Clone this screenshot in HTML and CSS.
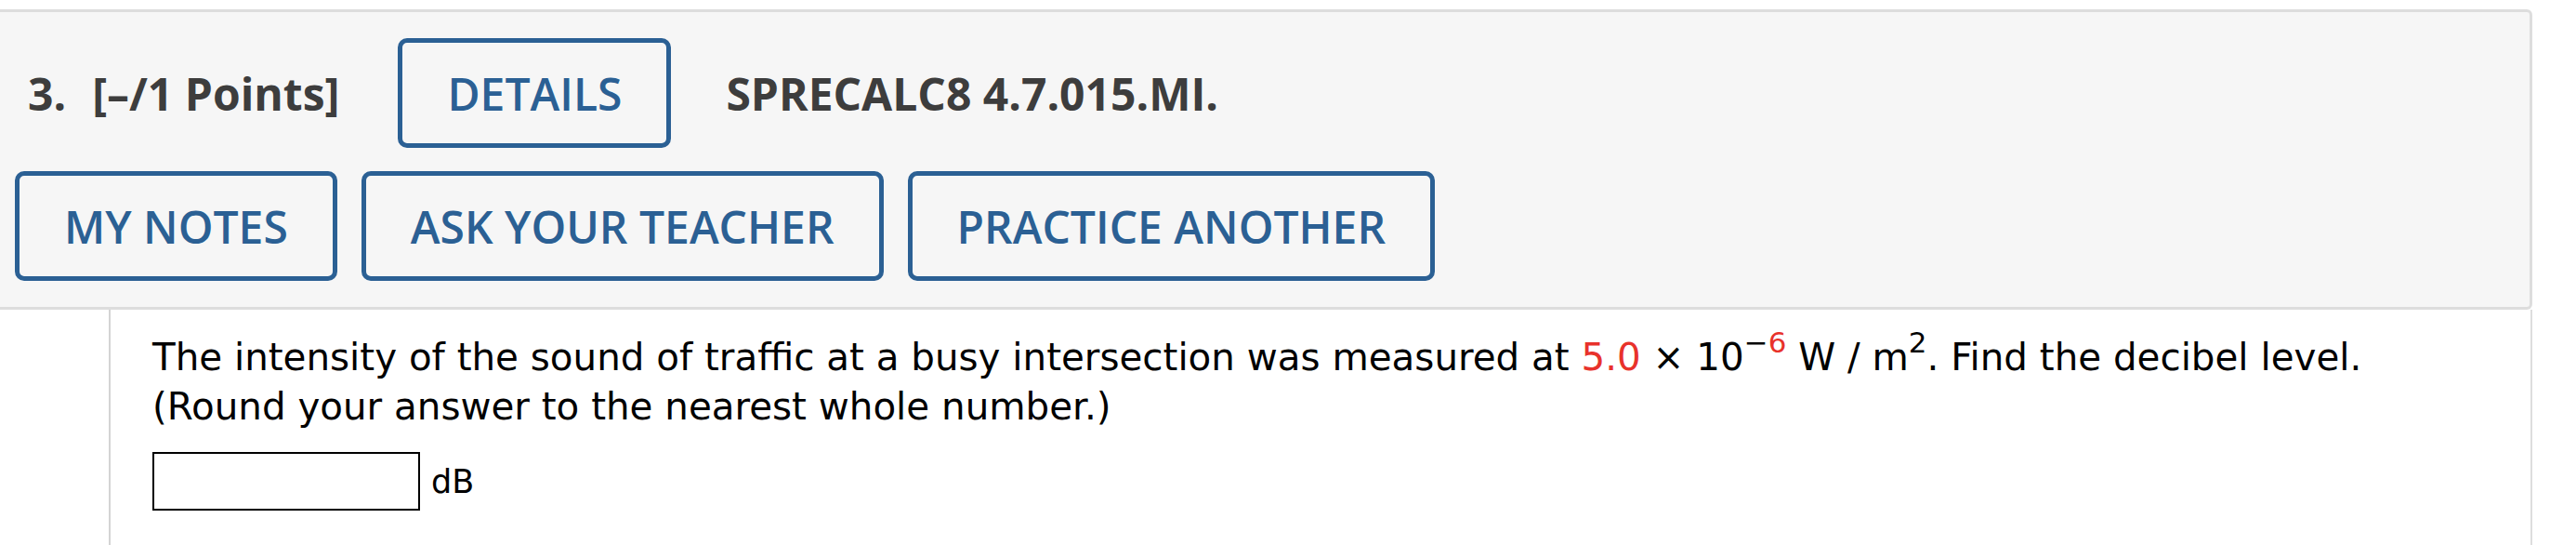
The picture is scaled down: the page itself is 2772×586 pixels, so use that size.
FILE: index.html
```html
<!DOCTYPE html>
<html lang="en">
<head>
<meta charset="utf-8">
<title>Question 3</title>
<link rel="stylesheet" href="styles.css">
</head>
<body>
<div class="page">
  <section class="question">
    <div class="qhead">
      <div class="row row-title">
        <span class="qnum">3.</span><span class="points">[–/1 Points]</span>
        <button class="btn btn-details">DETAILS</button>
        <span class="qcode">SPRECALC8 4.7.015.MI.</span>
      </div>
      <div class="row row-actions">
        <button class="btn">MY NOTES</button>
        <button class="btn">ASK YOUR TEACHER</button>
        <button class="btn">PRACTICE ANOTHER</button>
      </div>
    </div>
    <div class="qbody">
      <p class="prompt">The intensity of the sound of traffic at a busy intersection was measured at <span class="red">5.0</span> × 10<sup class="sup">−<span class="red">6</span></sup> W / m<sup class="sup">2</sup>. Find the decibel level.<br>(Round your answer to the nearest whole number.)</p>
      <div class="answer">
        <input class="answer-box" type="text" aria-label="answer">
        <span class="unit">dB</span>
      </div>
    </div>
  </section>
</div>
</body>
</html>
```

FILE: styles.css
```css
html, body {
  margin: 0;
  padding: 0;
  background: #ffffff;
}

.page {
  padding-top: 10px;
  width: 2772px;
  height: 576px;
  overflow: hidden;
}

.qhead {
  width: 2725px;
  box-sizing: border-box;
  background: #f6f6f6;
  border: 3px solid #dddddd;
  border-left: 0;
  border-radius: 0 6px 6px 0;
  padding: 28px 0 28px 16px;
  display: flex;
  flex-direction: column;
  gap: 25px;
}

.row {
  display: flex;
  align-items: center;
}

.row-title {
  padding-left: 14px;
  font-family: "Open Sans", "Liberation Sans", sans-serif;
  font-weight: 700;
  font-size: 48px;
  color: #3d3d3d;
}

.qnum {
  margin-right: 28px;
}

.row-actions {
  gap: 26px;
}

.btn {
  box-sizing: border-box;
  height: 118px;
  border: 5px solid #2b6094;
  border-radius: 10px;
  background: transparent;
  color: #2b6094;
  font-family: "Open Sans", "Liberation Sans", sans-serif;
  font-weight: 600;
  font-size: 48px;
  padding: 0 48px;
  display: inline-flex;
  align-items: center;
  justify-content: center;
  cursor: pointer;
}

.btn-details {
  margin-left: 63px;
  margin-right: 59px;
  padding: 0 48px;
}

.qbody {
  margin-left: 117px;
  width: 2608px;
  box-sizing: border-box;
  min-height: 260px;
  border-left: 2px solid #d4d4d4;
  border-right: 2px solid #dddddd;
  padding: 25px 0 40px 45px;
  font-family: "DejaVu Sans", Verdana, sans-serif;
  font-size: 40.4px;
  color: #000000;
}

.prompt {
  margin: 0;
  line-height: 53px;
  white-space: nowrap;
}

.red {
  color: #e8322b;
}

.sup {
  font-size: 31px;
  line-height: 0;
  vertical-align: 19px;
}

.answer {
  margin-top: 22px;
  display: flex;
  align-items: center;
  gap: 12px;
}

.answer-box {
  box-sizing: border-box;
  width: 288px;
  height: 63px;
  border: 2px solid #000000;
  border-radius: 0;
  padding: 0 8px;
  margin: 0;
  font-size: 36px;
  background: #ffffff;
}

.unit {
  font-size: 35px;
}
```
